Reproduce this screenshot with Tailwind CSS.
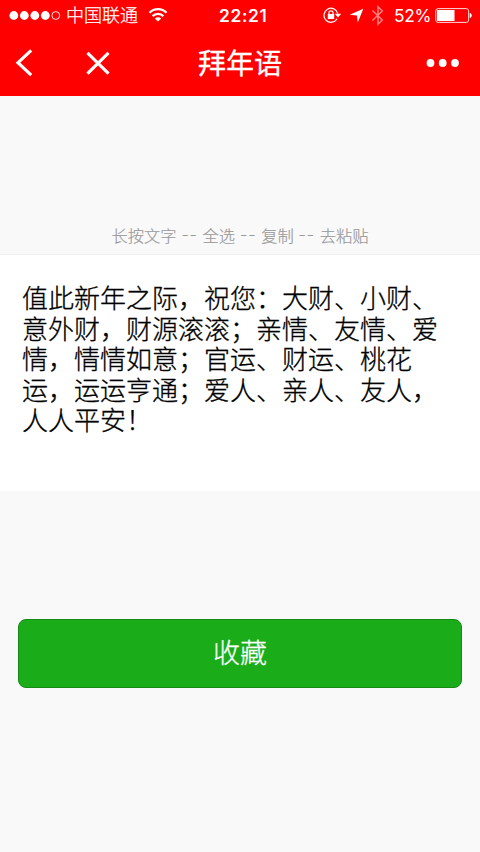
<!DOCTYPE html>
<html lang="zh-CN">
<head>
<meta charset="utf-8">
<meta name="viewport" content="width=device-width, initial-scale=1">
<title>拜年语</title>
<script src="https://cdn.jsdelivr.net/npm/@tailwindcss/browser@4"></script>
</head>
<body class="bg-[#f9f9f9] h-[852px] overflow-hidden font-['Noto_Sans_CJK_SC',sans-serif]">
<header class="h-24 bg-[#ff0000] text-white">
  <div class="h-[31px] grid grid-cols-[219px_104px_1fr]">
    <div class="flex items-center pl-[9px]">
      <svg class="w-[52px] h-[31px] shrink-0" viewBox="0 0 52 31" fill="#fff"><circle cx="4.8" cy="15.5" r="4.4"/><circle cx="15.3" cy="15.5" r="4.4"/><circle cx="25.8" cy="15.5" r="4.4"/><circle cx="36.3" cy="15.5" r="4.4"/><circle cx="46.8" cy="15.5" r="3.9" fill="none" stroke="#fff" stroke-width=".9"/></svg>
      <span class="ml-[5px] w-[73px] h-[31px] text-[18px] leading-[29px] whitespace-nowrap font-light [-webkit-text-stroke:0.25px_white]">中国联通</span>
      <svg class="ml-[9px] w-5 h-[31px] shrink-0" viewBox="0 0 20 31" fill="none" stroke="#fff" stroke-width="2.3"><path d="M1.500 12.700C6.200 8 13.800 8 18.500 12.700M4.600 16.100c3-3 7.800-3 10.800 0"/><path d="M6.800 18.600c1.800-1.700 4.600-1.700 6.400 0l-3.200 3z" fill="#fff" stroke="none"/></svg>
    </div>
    <div class="font-['Inter'] font-medium text-[17.500px] tracking-[0.7px] leading-[31px] whitespace-nowrap [-webkit-text-stroke:0.2px_white]">22:21</div>
    <div class="flex items-center">
      <svg class="w-[19px] h-[31px] shrink-0" viewBox="0 0 19 31" fill="none" stroke="#fff" stroke-width="1.2"><path d="M14.100 18.700A7 7 0 1 1 14.800 13.600"/><path d="M11.800 13.800h6.400L15 17.400z" fill="#fff" stroke="none"/><rect x="4.800" y="14" width="6.400" height="5" fill="#fff" stroke="none"/><path d="M6 14.500v-1.700a2 2 0 0 1 4 0v1.700"/></svg>
      <svg class="ml-[7px] w-[15px] h-[31px] shrink-0" viewBox="0 0 15 31"><path d="M14.300 8.700 8.800 22.400 7.900 15.500.7 14.800z" fill="#fff"/></svg>
      <svg class="ml-[7px] w-[14px] h-[31px] shrink-0 opacity-50" viewBox="0 0 14 31" fill="none" stroke="#fff" stroke-width="1.500"><path d="M1.400 10.500 11.300 20 7 24.300V6.700L11.300 11 1.400 20.500"/></svg>
      <span class="ml-[9px] w-[41px] font-['Inter'] text-[17.300px] tracking-[-0.3px] leading-[31px] whitespace-nowrap">52%</span>
      <svg class="w-[38px] h-[31px] shrink-0" viewBox="0 0 38 31"><rect x=".8" y="8.600" width="32.800" height="13.800" rx="2.300" fill="none" stroke="#fff" stroke-opacity=".85" stroke-width="1"/><path d="M2 10h17.500v11H2zM34.700 13c2.800.5 2.800 4.500 0 5z" fill="#fff"/></svg>
    </div>
  </div>
  <div class="h-[65px] grid grid-cols-[140px_1fr_140px] items-center">
    <svg class="w-[120px] h-[65px]" viewBox="0 0 120 65" fill="none" stroke="#fff" stroke-width="3.200"><path d="M31.200 19.300 18 31.700l13.200 12.400M87.500 21.900l21 20.800m0-20.800-21 20.800"/></svg>
    <h1 class="text-center text-[28px] leading-[63px] h-[65px] font-normal [-webkit-text-stroke:0.3px_white]">拜年语</h1>
    <svg class="w-[140px] h-[65px]" viewBox="0 0 140 65" fill="#fff"><circle cx="90.500" cy="32" r="3.900"/><circle cx="102.700" cy="32" r="3.900"/><circle cx="115" cy="32" r="3.900"/></svg>
  </div>
</header>
<main>
  <p class="h-[159px] pt-[127px] flex justify-center text-[16.300px] leading-6 text-[#999] whitespace-nowrap font-light [-webkit-text-stroke:0.2px_#999] border-b border-[#f1f1f1]">长按文字<span class="w-[26px] text-center font-['Inter'] tracking-[0.800px]">--</span>全选<span class="w-[26px] text-center font-['Inter'] tracking-[0.800px]">--</span>复制<span class="w-[26px] text-center font-['Inter'] tracking-[0.800px]">--</span>去粘贴</p>
  <section class="h-[236px] bg-white pt-[27px] pl-[22px] text-[26px] leading-[30.500px] text-black whitespace-nowrap font-light [-webkit-text-stroke:0.3px_black]">
    <div>值此新年之际，祝您：大财、小财、</div>
    <div>意外财，财源滚滚；亲情、友情、爱</div>
    <div>情，情情如意；官运、财运、桃花</div>
    <div>运，运运亨通；爱人、亲人、友人，</div>
    <div>人人平安！</div>
  </section>
  <button class="block mt-[128px] mx-[18px] w-[444px] h-[69px] pb-[2px] rounded-[8px] border border-[#158a15] bg-[#1aad19] text-white text-[27px] font-light [-webkit-text-stroke:0.3px_white]">收藏</button>
</main>
</body>
</html>
